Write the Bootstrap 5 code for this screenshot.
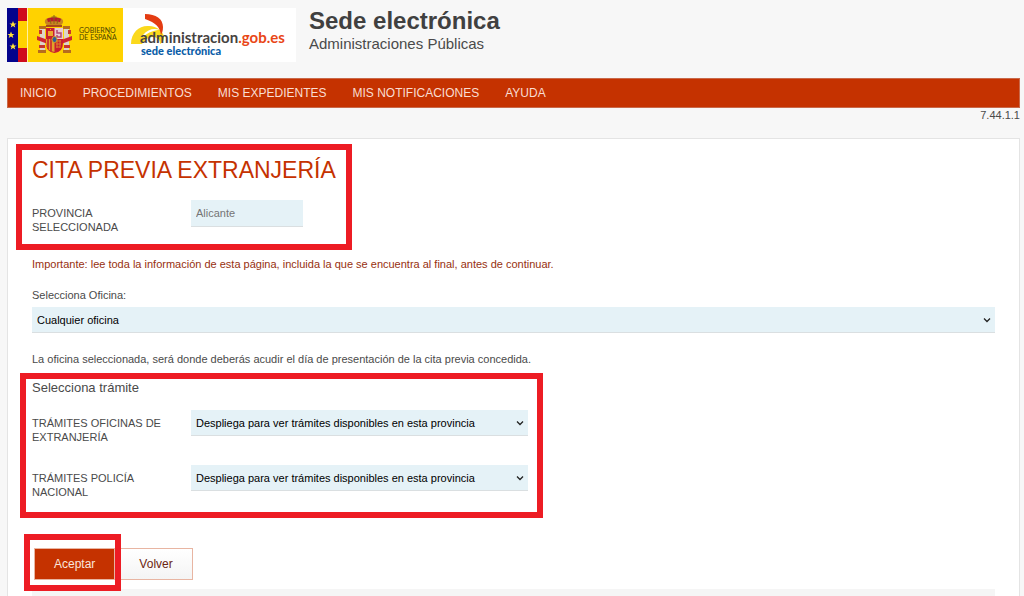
<!DOCTYPE html>
<html lang="es">
<head>
<meta charset="utf-8">
<meta name="viewport" content="width=device-width, initial-scale=1">
<title>Cita previa extranjería - Sede electrónica</title>
<link rel="stylesheet" href="https://cdn.jsdelivr.net/npm/bootstrap@5.3.0/dist/css/bootstrap.min.css">
<style>
  body { background: #f7f7f7; color: #4a4a4a; font-family: "Liberation Sans", Arial, sans-serif; font-size: 11px; line-height: 14px; }
  .page-shell { padding: 8px 4px 0 7px; }
  .brand-logo { display: block; width: 289px; height: 54px; }
  .brand-title { padding-left: 13px; }
  .site-title { color: #404040; font-size: 24px; line-height: 26px; }
  .site-subtitle { font-size: 15px; line-height: 20px; }
  .main-menu { background: #c53200; border: 1px solid #c9694a; min-height: 30px; gap: 26px; padding: 0 12px; }
  .main-menu .nav-link { color: #f9ddd2; font-size: 12px; line-height: 28px; padding: 0; }
  .content-panel { border: 1px solid #e4e4e4; border-bottom: 0; padding: 14px 24px 0; }
  .page-heading { color: #c53200; font-size: 23px; line-height: 34px; }
  .label-col { flex: 0 0 159px; }
  .label-col label { display: block; max-width: 140px; padding-top: 6px; line-height: 14px; }
  .notice { color: #97300f; margin: 11px 0 17px; }
  .office-label { margin-bottom: 5px; }
  .office-help { margin: 19px 0 13px; }
  .field { background-color: #e5f2f7; border: 0; border-bottom: 1px solid #dadfe1; border-radius: 0; color: #000; font-size: 11px; line-height: 14px; min-height: 0; height: 26px; padding: 5px; }
  .field:disabled { background-color: #e5f2f7; color: #757575; opacity: 1; }
  .field.form-select { background-position: right 4px center; background-size: 8px 8px; padding-right: 18px;
    background-image: url("data:image/svg+xml,%3csvg xmlns='http://www.w3.org/2000/svg' viewBox='0 0 8 8'%3e%3cpath fill='none' stroke='%23222' stroke-width='1.3' d='M1 2.5 4 5.5 7 2.5'/%3e%3c/svg%3e"); }
  .province-field { width: 112px; height: 27px; }
  .procedure-field { width: 337px; }
  .sub-heading { font-size: 13px; line-height: 18px; margin-bottom: 13px; }
  .form-row { min-height: 55px; }
  .province-row { padding-top: 9px; }
  .marked { position: relative; }
  .marked::after { content: ""; position: absolute; border: 6px solid #ed1c24; pointer-events: none; }
  .mark-province { width: 299px; }
  .mark-province::after { inset: -9px -21px -4px -16px; }
  .mark-procedures { width: 496px; }
  .mark-procedures::after { inset: -6px -15px 2px -12px; }
  .mark-accept::after { inset: -14px -6px -11px -10px; z-index: 1; }
  .actions { gap: 4px; margin: 28px 0 9px; padding-left: 2px; }
  .action { border: 1px solid #e8b5a2; border-radius: 0; font-size: 12px; line-height: 20px; padding: 5px 19px; }
  .action-main, .action-main:hover { background: #c53200; color: #f9e5dc; }
  .action-alt, .action-alt:hover { background: linear-gradient(#fff, #f4f4f4); color: #6b2410; }
  .info-strip { background: #f5f5f5; min-height: 6px; }
</style>
</head>
<body>
<div class="page-shell d-flex flex-column min-vh-100">
  <header class="d-flex mb-3">
    <svg class="brand-logo flex-shrink-0" viewBox="0 0 289 54" role="img" aria-label="Gobierno de España, administracion.gob.es">
      <rect width="289" height="54" fill="#fff"/>
      <rect width="116" height="54" fill="#ffd200"/>
      <rect width="11" height="54" fill="#03038c"/>
      <rect x="11" width="10" height="54" fill="#cf0c1d"/>
      <rect x="11" y="13" width="10" height="27" fill="#ffd200"/>
      <path d="M20.500 0V54" stroke="#fff0a0"/>
      <g fill="#ffe438">
        <path id="star" d="m6 13 1 2.500h2.500l-2 1.500.8 2.500L6 18l-2.300 1.500.8-2.500-2-1.500H5z"/>
        <use href="#star" x="-2" y="10.500"/>
        <use href="#star" y="22"/>
      </g>
      <g>
        <path d="M40 17c-3-2-3-6 1-7 2-1 4-1 6-1s4 0 6 1c4 1 4 5 1 7z" fill="#c78520"/>
        <path d="M40 11c3-2 11-2 14 0l-1 3c-3-1-9-1-12 0z" fill="#b9192c"/>
        <path d="M39 17h16v2H39z" fill="#a84719"/><path d="M47 7v9M44.500 9h5M43 11l1 5M51 11l-1 5" stroke="#8d6517" fill="none"/>
        <path d="M33 20h5v24h-5zM57 20h5v24h-5z" fill="#ddd4ca"/>
        <path d="M32 18h7v3h-7zM56 18h7v3h-7zM31 42h8v3h-8zM56 42h8v3h-8z" fill="#b66c1e"/>
        <path d="m30 28 11 4v4l-11-4zM65 28l-11 4v4l11-4z" fill="#cf2631"/>
        <path d="M32 22h3v4h-3zM61 22h3v4h-3zM32 37h6v3h-6zM57 37h6v3h-6z" fill="#c8362e"/>
        <path d="M39 20h17v15q0 9-8.500 10Q39 44 39 35z" fill="#c91e2e"/>
        <path d="M47.500 20H56v11h-8.500z" fill="#e9c9d1"/>
        <path d="M39 31h8.500v13Q39 43 39 34z" fill="#e2a32a"/>
        <path d="M41 31v10M44 31v12" stroke="#c91e2e" stroke-width="1.500"/>
        <path d="M41 28v-5h5v5zM42 22h1v-1h1v1h1" fill="#eaa62e"/>
        <path d="M50 22v3h4v4h-4v-2" fill="none" stroke="#b34873" stroke-width="1.500"/>
        <path d="M49 33h5M49 36h5M49 39h4M50 32v8M53 32v8" stroke="#d88328"/>
        <ellipse cx="47.500" cy="31.500" rx="2.500" ry="3" fill="#315b9c" stroke="#d5a51e"/>
      </g>
      <g font-family="Lato, sans-serif" font-size="7" fill="#4d4400">
        <text x="72" y="25">GOBIERNO</text>
        <text x="72" y="32">DE ESPAÑA</text>
      </g>
      <path d="M124 36c0-12 9-19 18-18 8 0 14 5 15 11 0 3-1 5-4 7 0-5-3-7-7-7-5 0-8 3-11 7z" fill="#fbd91c"/>
      <path d="M136 27c5-6 11-7 17-5-6 0-11 2-17 7z" fill="#fff"/>
      <path d="M138 6c11 0 18 5 18 13 0 4-1 6-2 8-1-8-5-12-16-16z" fill="#e43c12"/>
      <text x="133" y="35" font-family="Lato, sans-serif" font-size="15" font-weight="700" fill="#46423f">administracion<tspan fill="#e94616">.gob.es</tspan></text>
      <text x="134" y="47" font-family="Lato, sans-serif" font-size="11" font-weight="900" fill="#0a5da8">sede electrónica</text>
    </svg>
    <div class="brand-title">
      <h1 class="site-title fw-bold mb-0">Sede electrónica</h1>
      <p class="site-subtitle mb-0">Administraciones Públicas</p>
    </div>
  </header>

  <nav class="main-menu nav" aria-label="Principal">
    <a class="nav-link" href="#">INICIO</a>
    <a class="nav-link" href="#">PROCEDIMIENTOS</a>
    <a class="nav-link" href="#">MIS EXPEDIENTES</a>
    <a class="nav-link" href="#">MIS NOTIFICACIONES</a>
    <a class="nav-link" href="#">AYUDA</a>
  </nav>
  <div class="text-end mb-3">7.44.1.1</div>

  <main class="content-panel bg-white flex-grow-1 d-flex flex-column">
    <form class="flex-grow-1 d-flex flex-column">
      <section class="marked mark-province">
        <h2 class="page-heading text-nowrap mb-0">CITA PREVIA EXTRANJERÍA</h2>
        <div class="d-flex form-row province-row mt-1">
          <div class="label-col"><label for="province">PROVINCIA SELECCIONADA</label></div>
          <input class="form-control field province-field" id="province" value="Alicante" disabled>
        </div>
      </section>

      <p class="notice">Importante: lee toda la información de esta página, incluida la que se encuentra al final, antes de continuar.</p>

      <label class="office-label" for="office">Selecciona Oficina:</label>
      <select class="form-select field" id="office"><option>Cualquier oficina</option></select>
      <p class="office-help">La oficina seleccionada, será donde deberás acudir el día de presentación de la cita previa concedida.</p>

      <section class="marked mark-procedures">
        <h3 class="sub-heading fw-normal">Selecciona trámite</h3>
        <div class="d-flex form-row">
          <div class="label-col"><label for="immigration">TRÁMITES OFICINAS DE EXTRANJERÍA</label></div>
          <select class="form-select field procedure-field" id="immigration"><option>Despliega para ver trámites disponibles en esta provincia</option></select>
        </div>
        <div class="d-flex form-row">
          <div class="label-col"><label for="police">TRÁMITES POLICÍA NACIONAL</label></div>
          <select class="form-select field procedure-field" id="police"><option>Despliega para ver trámites disponibles en esta provincia</option></select>
        </div>
      </section>

      <div class="actions d-flex">
        <div class="marked mark-accept"><button class="btn action action-main" type="submit">Aceptar</button></div>
        <button class="btn action action-alt" type="button">Volver</button>
      </div>
      <div class="info-strip flex-grow-1"></div>
    </form>
  </main>
</div>
<script src="https://cdn.jsdelivr.net/npm/bootstrap@5.3.0/dist/js/bootstrap.bundle.min.js"></script>
</body>
</html>
